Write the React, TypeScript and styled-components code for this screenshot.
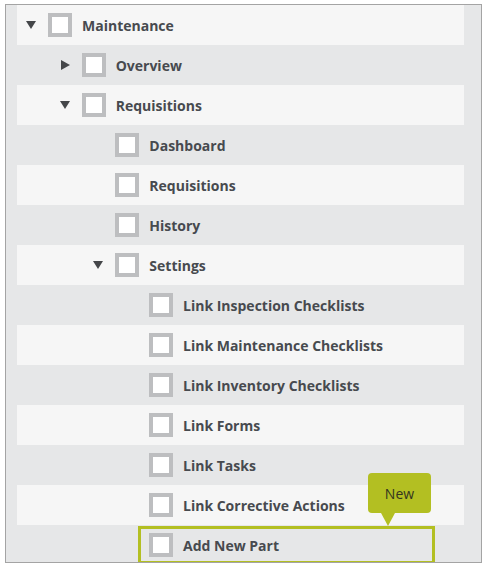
import React from 'react';
import styled, { createGlobalStyle } from 'styled-components';

const GlobalStyle = createGlobalStyle`
  html, body {
    margin: 0;
    padding: 0;
    background: #ffffff;
  }
  body {
    font-family: 'Open Sans', 'Liberation Sans', sans-serif;
  }
`;

const Page = styled.div`
  padding: 4px 0 0 5px;
`;

const TreePanel = styled.div`
  width: 477px;
  height: 559px;
  box-sizing: border-box;
  border: 1px solid #a4a4a4;
  background: #e6e7e8;
  padding: 0 17px 0 11px;
  overflow: hidden;
`;

const Row = styled.div<{ $level: number; $striped: boolean }>`
  position: relative;
  display: flex;
  align-items: center;
  height: 40px;
  box-sizing: border-box;
  padding-left: ${(p) => 9 + p.$level * 33.67}px;
  background: ${(p) => (p.$striped ? '#f6f6f6' : 'transparent')};
`;

const Toggle = styled.span`
  display: flex;
  align-items: center;
  width: 22px;
  height: 40px;
  flex-shrink: 0;
`;

const CaretDown = styled.span`
  width: 0;
  height: 0;
  border-left: 5px solid transparent;
  border-right: 5px solid transparent;
  border-top: 8px solid #444649;
`;

const CaretRight = styled.span`
  width: 0;
  height: 0;
  margin-left: 1px;
  border-top: 5px solid transparent;
  border-bottom: 5px solid transparent;
  border-left: 9px solid #444649;
`;

const Checkbox = styled.span`
  width: 24px;
  height: 24px;
  box-sizing: border-box;
  border: 4px solid #bdbec0;
  background: #ffffff;
  flex-shrink: 0;
`;

const Label = styled.span`
  margin-left: 10px;
  margin-top: 1px;
  font-size: 14px;
  font-weight: 700;
  color: #474a4f;
  white-space: nowrap;
`;

const Spotlight = styled.div`
  position: absolute;
  left: 121px;
  top: 1px;
  width: 297px;
  height: 38px;
  box-sizing: border-box;
  border: 3px solid #b3bf22;
  pointer-events: none;
`;

const Badge = styled.div`
  position: absolute;
  left: 227px;
  bottom: calc(100% + 16px);
  width: 63px;
  height: 40px;
  border-radius: 4px;
  background: #b3bf22;
  color: #34351f;
  font-size: 14px;
  display: flex;
  align-items: center;
  justify-content: center;

  &::after {
    content: '';
    position: absolute;
    left: 13px;
    top: 100%;
    border-left: 7px solid transparent;
    border-right: 7px solid transparent;
    border-top: 13px solid #b3bf22;
  }
`;

type Node = {
  label: string;
  level: number;
  caret?: 'down' | 'right';
  isNew?: boolean;
};

const nodes: Node[] = [
  { label: 'Maintenance', level: 0, caret: 'down' },
  { label: 'Overview', level: 1, caret: 'right' },
  { label: 'Requisitions', level: 1, caret: 'down' },
  { label: 'Dashboard', level: 2 },
  { label: 'Requisitions', level: 2 },
  { label: 'History', level: 2 },
  { label: 'Settings', level: 2, caret: 'down' },
  { label: 'Link Inspection Checklists', level: 3 },
  { label: 'Link Maintenance Checklists', level: 3 },
  { label: 'Link Inventory Checklists', level: 3 },
  { label: 'Link Forms', level: 3 },
  { label: 'Link Tasks', level: 3 },
  { label: 'Link Corrective Actions', level: 3 },
  { label: 'Add New Part', level: 3, isNew: true },
];

export default function App() {
  return (
    <>
      <GlobalStyle />
      <Page>
        <TreePanel>
          {nodes.map((node, i) => (
            <Row key={i} $level={node.level} $striped={i % 2 === 0}>
              <Toggle>
                {node.caret === 'down' && <CaretDown />}
                {node.caret === 'right' && <CaretRight />}
              </Toggle>
              <Checkbox />
              <Label>{node.label}</Label>
              {node.isNew && (
                <Spotlight>
                  <Badge>New</Badge>
                </Spotlight>
              )}
            </Row>
          ))}
        </TreePanel>
      </Page>
    </>
  );
}
